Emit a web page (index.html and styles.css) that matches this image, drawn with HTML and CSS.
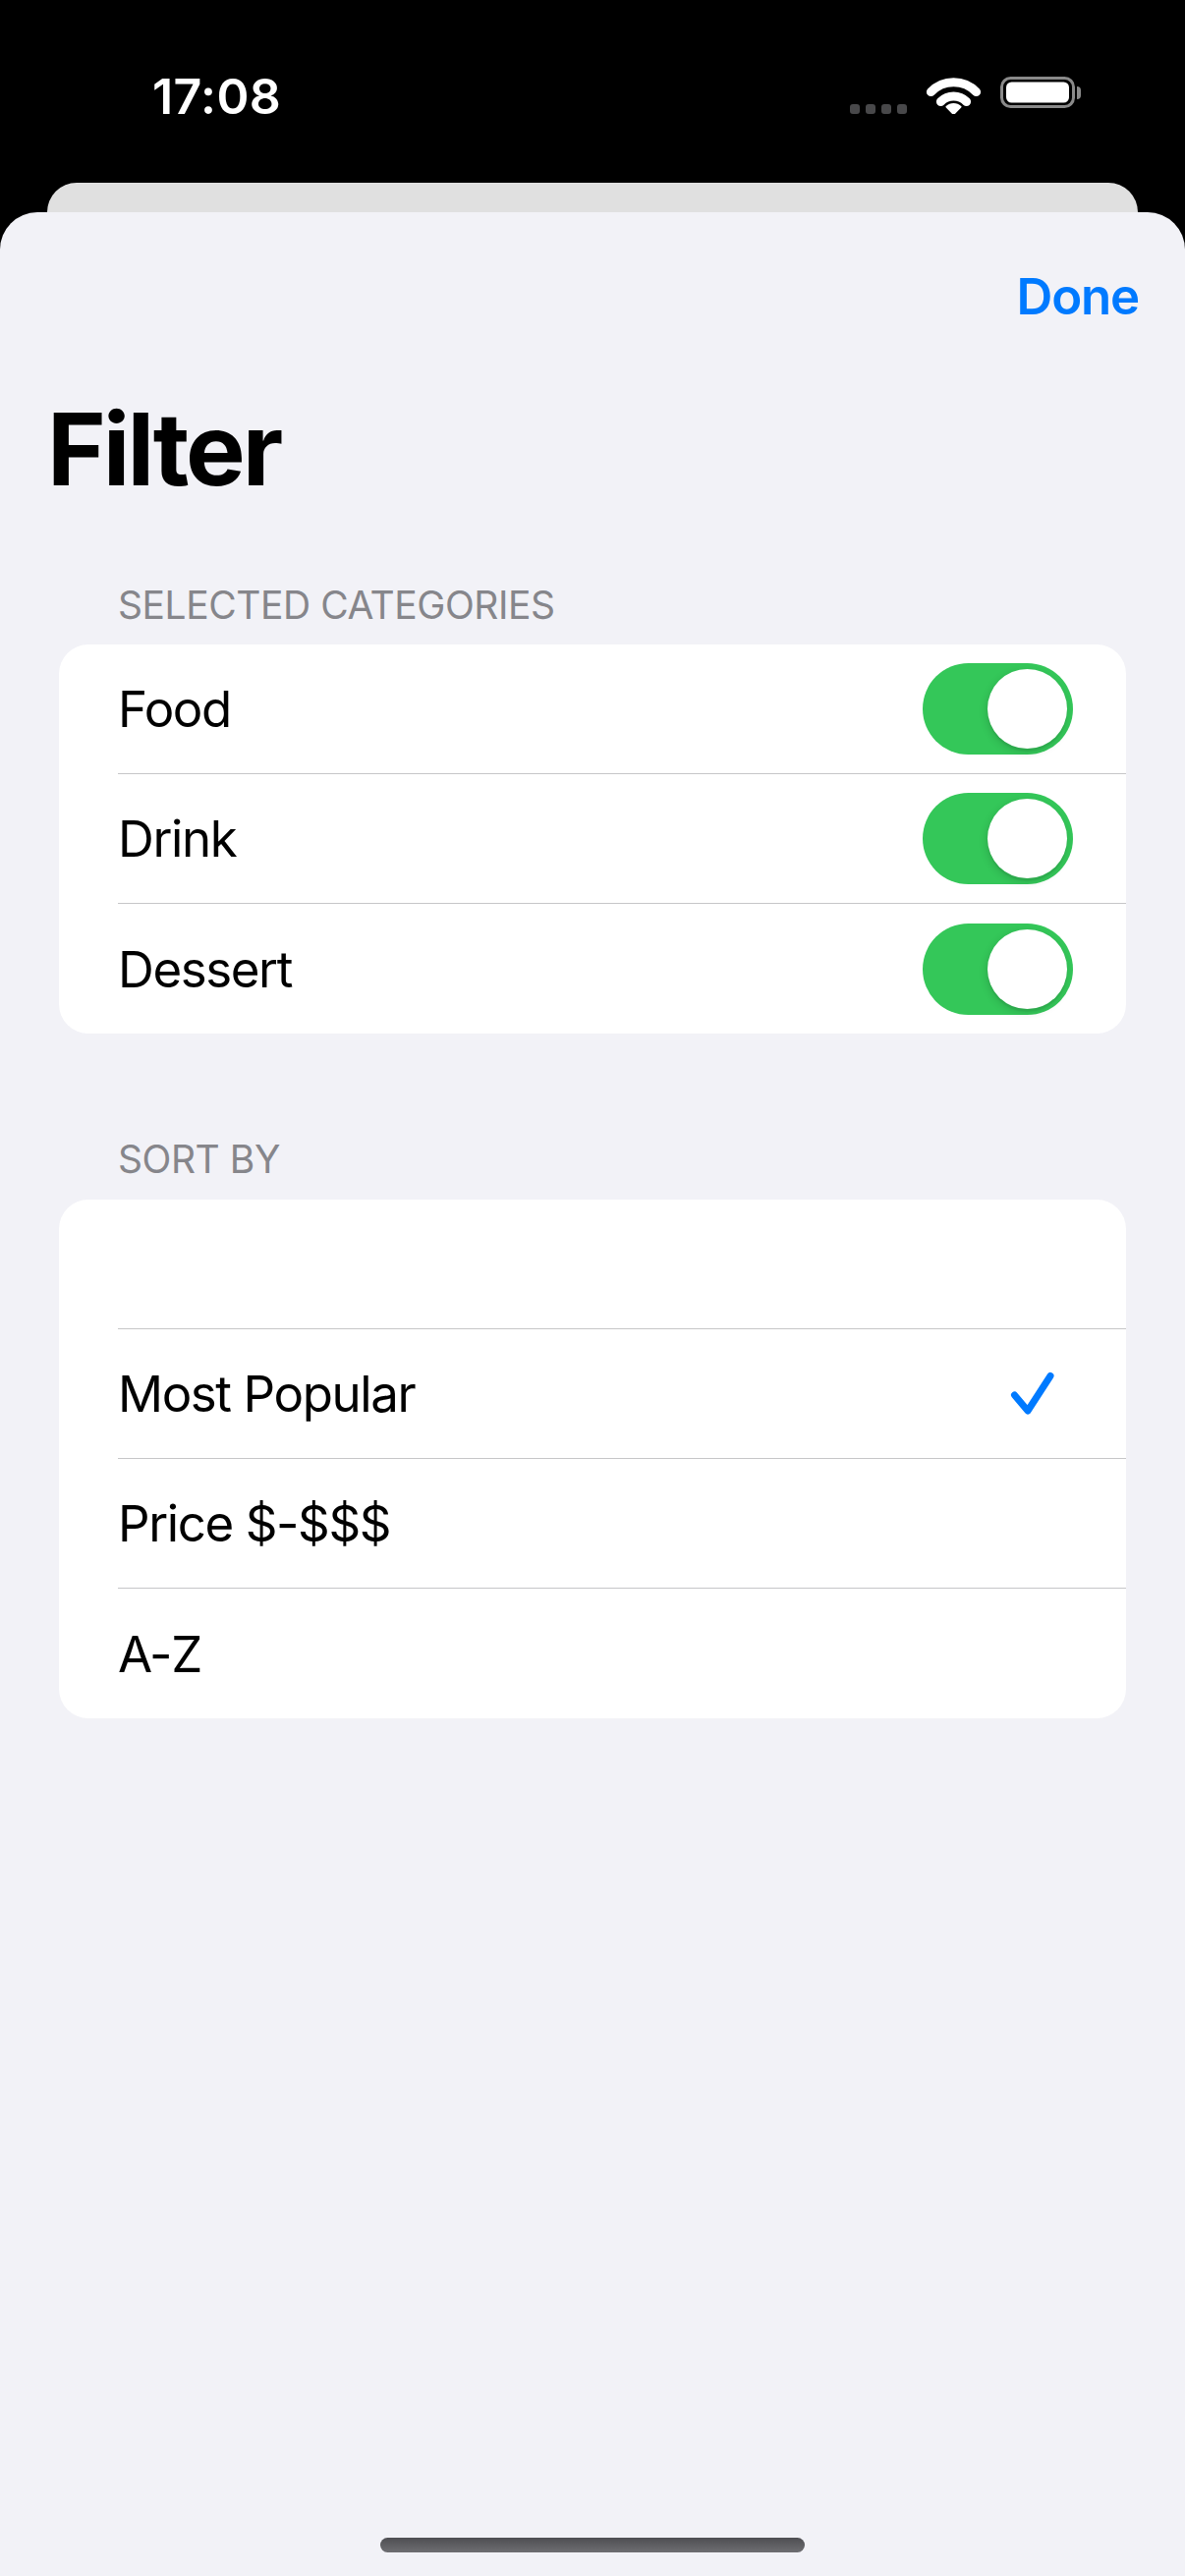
FILE: index.html
```html
<!DOCTYPE html>
<html lang="en">
<head>
<meta charset="utf-8">
<title>Filter</title>
<link rel="stylesheet" href="styles.css">
</head>
<body>
<div class="screen">
  <header class="status">
    <span class="time">17:08</span>
    <svg class="status-icons" width="235" height="38" viewBox="0 0 235 38" aria-hidden="true">
      <rect x="0" y="28" width="10" height="10" rx="3" fill="#48484a"/>
      <rect x="16" y="28" width="10" height="10" rx="3" fill="#48484a"/>
      <rect x="32" y="28" width="10" height="10" rx="3" fill="#48484a"/>
      <rect x="48" y="28" width="10" height="10" rx="3" fill="#48484a"/>
      <path d="M82.4 15.6 A32 32 0 0 1 128.6 15.6" fill="none" stroke="#fff" stroke-width="9" stroke-linecap="round"/>
      <path d="M92.4 25.5 A18.5 18.5 0 0 1 118.6 25.5" fill="none" stroke="#fff" stroke-width="9" stroke-linecap="round"/>
      <path d="M105.5 38 L98.5 30.8 A10 10 0 0 1 112.5 30.8 Z" fill="#fff" stroke="#fff" stroke-width="2" stroke-linejoin="round"/>
      <rect x="154.5" y="1.5" width="73" height="29" rx="9" fill="none" stroke="#8a8a8a" stroke-width="3"/>
      <rect x="159" y="5.5" width="64" height="21" rx="5.5" fill="#fff"/>
      <path d="M231 10 Q235 10 235 14 L235 19 Q235 23 231 23 Z" fill="#8a8a8a"/>
    </svg>
  </header>
  <div class="back-sheet"></div>
  <main class="sheet">
    <nav class="nav">
      <span class="done">Done</span>
    </nav>
    <h1 class="title">Filter</h1>

    <h2 class="section-header">SELECTED CATEGORIES</h2>
    <ul class="group">
      <li class="row">
        <span class="label">Food</span>
        <span class="switch"><span class="knob"></span></span>
      </li>
      <li class="row">
        <span class="label">Drink</span>
        <span class="switch"><span class="knob"></span></span>
      </li>
      <li class="row">
        <span class="label">Dessert</span>
        <span class="switch"><span class="knob"></span></span>
      </li>
    </ul>

    <h2 class="section-header section-header--spaced">SORT BY</h2>
    <ul class="group group--sort">
      <li class="row"><span class="label"></span></li>
      <li class="row">
        <span class="label">Most Popular</span>
        <svg class="check" width="45" height="44" viewBox="0 0 45 44" aria-hidden="true">
          <path d="M4.5 23 L18 39 L41 3.5" fill="none" stroke="#007aff" stroke-width="7" stroke-linecap="round" stroke-linejoin="round"/>
        </svg>
      </li>
      <li class="row"><span class="label">Price $-$$$</span></li>
      <li class="row"><span class="label">A-Z</span></li>
    </ul>

    <div class="home-indicator"></div>
  </main>
</div>
</body>
</html>
```

FILE: styles.css
```css
* {
  box-sizing: border-box;
}

html, body {
  margin: 0;
  padding: 0;
  background: #000;
}

body {
  font-family: Inter, "Noto Sans", "Liberation Sans", sans-serif;
  color: #000;
}

.screen {
  width: 1206px;
  height: 2622px;
  display: flex;
  flex-direction: column;
  background: #000;
  overflow: hidden;
}

.status {
  height: 186px;
  flex: none;
  display: flex;
  justify-content: space-between;
  align-items: flex-start;
  padding: 73px 106px 0 155px;
}

.time {
  font-size: 50px;
  line-height: 50px;
  font-weight: 600;
  color: #fff;
  letter-spacing: 0.4px;
}

.status-icons {
  display: block;
  margin-top: 5px;
}

.back-sheet {
  flex: none;
  height: 30px;
  margin: 0 48px;
  background: #e0e0e0;
  border-radius: 30px 30px 0 0;
}

.sheet {
  flex: 1;
  display: flex;
  flex-direction: column;
  background: #f2f2f7;
  border-radius: 38px 38px 0 0;
  padding-top: 60px;
}

.nav {
  display: flex;
  justify-content: flex-end;
  padding-right: 47px;
}

.done {
  font-size: 51px;
  line-height: 51px;
  font-weight: 600;
  color: #007aff;
  letter-spacing: -1.2px;
}

.title {
  margin: 79px 0 0;
  padding-left: 48px;
  font-size: 102px;
  line-height: 102px;
  font-weight: 700;
  letter-spacing: -3px;
}

.section-header {
  margin: 88px 0 0;
  padding-left: 120px;
  font-size: 39px;
  line-height: 39px;
  font-weight: 400;
  color: #86868b;
  letter-spacing: -0.45px;
}

.section-header--spaced {
  margin-top: 108px;
}

.group {
  list-style: none;
  margin: 21px 60px 0;
  padding: 0;
  background: #fff;
  border-radius: 30px;
  overflow: hidden;
}

.group--sort {
  margin-top: 22px;
}

.row {
  margin-left: 60px;
  height: 132px;
  border-bottom: 1px solid #c6c6c8;
  display: flex;
  align-items: center;
  justify-content: space-between;
  padding-right: 54px;
}

.row:last-child {
  border-bottom: none;
}

.label {
  font-size: 51px;
  line-height: 51px;
  font-weight: 400;
  letter-spacing: -1.4px;
}

.switch {
  width: 153px;
  height: 93px;
  border-radius: 47px;
  background: #34c759;
  display: flex;
  align-items: center;
  justify-content: flex-end;
  padding: 0 6px;
}

.knob {
  width: 81px;
  height: 81px;
  border-radius: 50%;
  background: #fff;
  box-shadow: -1px 3px 8px rgba(0, 0, 0, 0.15), 0 3px 1px rgba(0, 0, 0, 0.05);
}

.group--sort .row {
  padding-right: 73px;
}

.check {
  display: block;
  overflow: visible;
}

.home-indicator {
  margin: auto auto 24px;
  width: 432px;
  height: 15px;
  border-radius: 8px;
  background: linear-gradient(#4e4e52, #6e6e72);
}
```
